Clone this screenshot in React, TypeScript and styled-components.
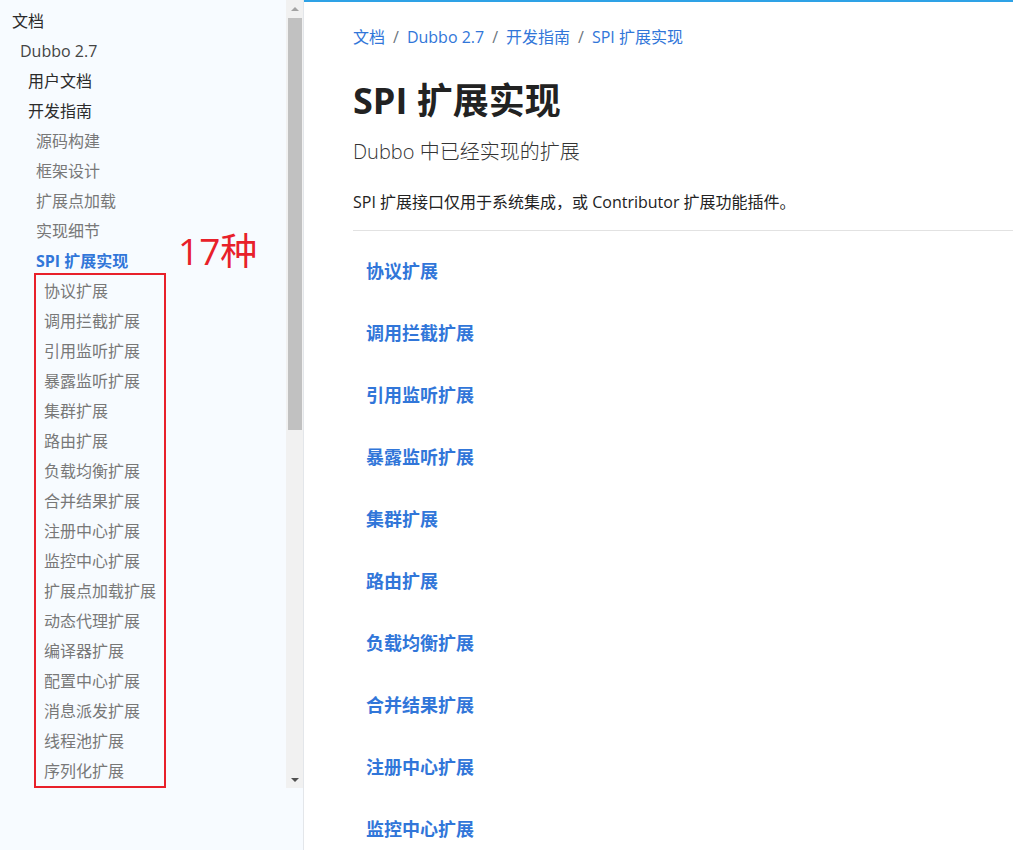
import React from "react";
import styled, { createGlobalStyle } from "styled-components";

const Global = createGlobalStyle`
  html, body { margin: 0; padding: 0; height: 100%; background: #fff; }
  body { font-family: "Open Sans", "Noto Sans CJK SC", sans-serif; }
  #root { height: 100%; }
  ul { list-style: none; margin: 0; padding: 0; }
`;

const Page = styled.div`
  display: flex;
  height: 850px;
  overflow: hidden;
`;

const Aside = styled.aside`
  flex: 0 0 303px;
  width: 303px;
  background: #f7fbff;
  border-right: 1px solid #e3e6ea;
  display: flex;
  flex-direction: column;
`;

const NavFrame = styled.div`
  height: 788px;
  display: flex;
`;

const NavBody = styled.div`
  flex: 1;
  overflow: hidden;
`;

const Rail = styled.div`
  flex: 0 0 17px;
  background: #f1f1f1;
  display: flex;
  flex-direction: column;
`;

const Arrow = styled.div<{ $dir: "up" | "down" }>`
  height: 17px;
  display: flex;
  align-items: center;
  justify-content: center;
  &::before {
    content: "";
    width: 0;
    height: 0;
    border-left: 4px solid transparent;
    border-right: 4px solid transparent;
    ${(p) => (p.$dir === "up" ? "border-bottom: 4px solid #a3a3a3;" : "border-top: 4px solid #505050;")}
  }
`;

const Track = styled.div`
  flex: 1;
  padding: 1px 1px 0 2px;
`;

const Thumb = styled.div`
  height: 412px;
  background: #c1c1c1;
`;

const Tree = styled.ul`
  padding: 6px 0 24px 12px;
`;

const Sub = styled.ul`
  padding-left: 8px;
`;

const Item = styled.li<{ $tone: "dark" | "mid" | "gray" | "active" }>`
  font-size: 16px;
  line-height: 30px;
  white-space: nowrap;
  color: ${(p) =>
    p.$tone === "dark" ? "#2b2b2b" : p.$tone === "mid" ? "#444" : p.$tone === "active" ? "#3176d9" : "#787878"};
  font-weight: ${(p) => (p.$tone === "active" ? 700 : 400)};
`;

const Row = styled.div`
  position: relative;
`;

const Note = styled.span`
  position: absolute;
  left: 142px;
  top: -20px;
  font-size: 37px;
  line-height: 50px;
  font-weight: 400;
  color: #e8202a;
`;

const Boxed = styled.ul`
  margin: -3px 0 0 -2px;
  padding: 1px 0 0 8px;
  border: 2px solid #e8202a;
  width: 120px;
`;

const Main = styled.main`
  flex: 1;
  border-top: 2px solid #2ea2e6;
  padding: 23px 0 0 49px;
  min-width: 0;
`;

const Crumbs = styled.nav`
  font-size: 16px;
  line-height: 24px;
  color: #3176d9;
  display: flex;
`;

const Sep = styled.span`
  color: #6c757d;
  padding: 0 8px;
`;

const Title = styled.h1`
  margin: 29px 0 0;
  font-size: 36px;
  line-height: 46px;
  font-weight: 700;
  color: #222;
`;

const Lead = styled.p`
  margin: 13px 0 0;
  font-size: 20px;
  line-height: 30px;
  font-weight: 300;
  color: #333;
`;

const Para = styled.p`
  margin: 23px 0 0;
  font-size: 16px;
  line-height: 24px;
  color: #222;
  white-space: nowrap;
`;

const Rule = styled.hr`
  margin: 16px 0 0;
  border: 0;
  border-top: 1px solid #e2e2e2;
`;

const Links = styled.ul`
  padding: 27px 0 0 13px;
  display: flex;
  flex-direction: column;
  gap: 35px;
`;

const LinkItem = styled.li`
  font-size: 18px;
  line-height: 27px;
  font-weight: 700;
  color: #3176d9;
`;

const spi = [
  "协议扩展", "调用拦截扩展", "引用监听扩展", "暴露监听扩展", "集群扩展", "路由扩展",
  "负载均衡扩展", "合并结果扩展", "注册中心扩展", "监控中心扩展", "扩展点加载扩展",
  "动态代理扩展", "编译器扩展", "配置中心扩展", "消息派发扩展", "线程池扩展", "序列化扩展",
];

const dev1 = ["源码构建", "框架设计", "扩展点加载", "实现细节"];

export default function App() {
  return (
    <>
      <Global />
      <Page>
        <Aside>
          <NavFrame>
            <NavBody>
              <Tree>
                <Item $tone="dark">文档</Item>
                <Sub>
                  <Item $tone="mid">Dubbo 2.7</Item>
                  <Sub>
                    <Item $tone="dark">用户文档</Item>
                    <Item $tone="dark">开发指南</Item>
                    <Sub>
                      {dev1.map((t) => (
                        <Item key={t} $tone="gray">{t}</Item>
                      ))}
                      <Item $tone="active">
                        <Row>
                          SPI 扩展实现
                          <Note>17种</Note>
                        </Row>
                      </Item>
                      <Boxed>
                        {spi.map((t) => (
                          <Item key={t} $tone="gray">{t}</Item>
                        ))}
                      </Boxed>
                    </Sub>
                  </Sub>
                </Sub>
              </Tree>
            </NavBody>
            <Rail>
              <Arrow $dir="up" />
              <Track>
                <Thumb />
              </Track>
              <Arrow $dir="down" />
            </Rail>
          </NavFrame>
        </Aside>
        <Main>
          <Crumbs>
            <span>文档</span>
            <Sep>/</Sep>
            <span>Dubbo 2.7</span>
            <Sep>/</Sep>
            <span>开发指南</span>
            <Sep>/</Sep>
            <span>SPI 扩展实现</span>
          </Crumbs>
          <Title>SPI 扩展实现</Title>
          <Lead>Dubbo 中已经实现的扩展</Lead>
          <Para>SPI 扩展接口仅用于系统集成，或 Contributor 扩展功能插件。</Para>
          <Rule />
          <Links>
            {spi.map((t) => (
              <LinkItem key={t}>{t}</LinkItem>
            ))}
          </Links>
        </Main>
      </Page>
    </>
  );
}
